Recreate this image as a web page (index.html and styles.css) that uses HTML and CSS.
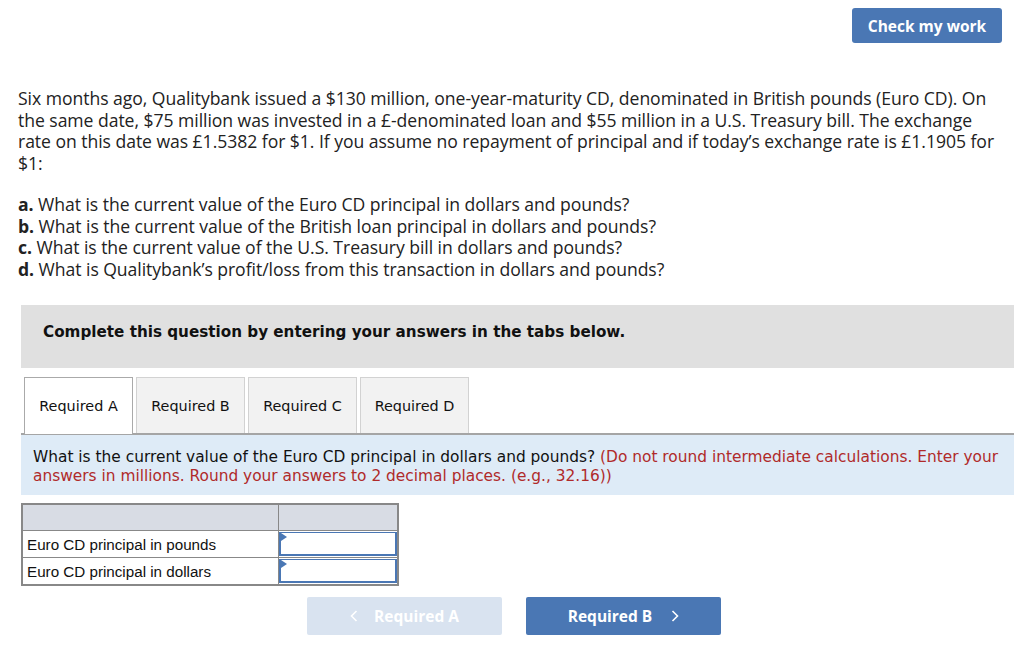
FILE: index.html
```html
<!DOCTYPE html>
<html>
<head>
<meta charset="utf-8">
<link rel="stylesheet" href="styles.css">
</head>
<body>
<div class="page">
  <div class="topbar">
    <button class="check">Check my work</button>
  </div>
  <div class="question">
    <p class="intro">Six months ago, Qualitybank issued a $130 million, one-year-maturity CD, denominated in British pounds (Euro CD). On the same date, $75 million was invested in a £-denominated loan and $55 million in a U.S. Treasury bill. The exchange rate on this date was £1.5382 for $1. If you assume no repayment of principal and if today’s exchange rate is £1.1905 for $1:</p>
    <ul class="parts">
      <li><b>a.</b> What is the current value of the Euro CD principal in dollars and pounds?</li>
      <li><b>b.</b> What is the current value of the British loan principal in dollars and pounds?</li>
      <li><b>c.</b> What is the current value of the U.S. Treasury bill in dollars and pounds?</li>
      <li><b>d.</b> What is Qualitybank’s profit/loss from this transaction in dollars and pounds?</li>
    </ul>
  </div>
  <div class="complete">Complete this question by entering your answers in the tabs below.</div>
  <div class="tabs">
    <div class="tab active">Required A</div>
    <div class="tab">Required B</div>
    <div class="tab">Required C</div>
    <div class="tab">Required D</div>
  </div>
  <div class="prompt">What is the current value of the Euro CD principal in dollars and pounds? <span class="hint">(Do not round intermediate calculations. Enter your answers in millions. Round your answers to 2 decimal places. (e.g., 32.16))</span></div>
  <table class="answers">
    <tr class="head"><td class="label"></td><td class="val"></td></tr>
    <tr><td class="label">Euro CD principal in pounds</td><td class="val"><div class="input"></div></td></tr>
    <tr><td class="label">Euro CD principal in dollars</td><td class="val"><div class="input"></div></td></tr>
  </table>
  <div class="nav">
    <button class="navbtn prev"><svg class="chev left" width="8" height="12" viewBox="0 0 8 12"><path d="M6.5 1 L1.5 6 L6.5 11" fill="none" stroke="#fff" stroke-width="1.6"/></svg>Required A</button>
    <button class="navbtn next">Required B<svg class="chev right" width="8" height="12" viewBox="0 0 8 12"><path d="M1.5 1 L6.5 6 L1.5 11" fill="none" stroke="#fff" stroke-width="1.6"/></svg></button>
  </div>
</div>
</body>
</html>
```

FILE: styles.css
```css
html, body { margin: 0; padding: 0; background: #fff; }
body { font-family: "Open Sans", "Liberation Sans", sans-serif; color: #222; }
.page { width: 1024px; }
.topbar { display: flex; justify-content: flex-end; padding: 8px 22px 0 0; }
.check {
  width: 150px; height: 35px; border: none; border-radius: 3px;
  background: #4a77b4; color: #fff; font-family: "Open Sans", sans-serif;
  font-weight: 700; font-size: 15.5px; cursor: pointer; padding: 0;
}
.question { padding: 45px 24px 0 18px; font-size: 17.6px; line-height: 21.5px; color: #222; letter-spacing: -0.05px; }
.intro { margin: 0; }
.parts { list-style: none; margin: 20px 0 0 0; padding: 0; }
.parts b { font-weight: 700; }
.complete {
  margin: 25px 10px 0 21px; height: 63px; box-sizing: border-box;
  background: #e0e0e0; padding: 0 22px 10px; display: flex; align-items: center;
  font-family: "DejaVu Sans", Verdana, sans-serif; font-weight: 700; font-size: 15.2px; color: #111;
}
.tabs { display: flex; gap: 3px; margin: 9px 0 0 24px; height: 56px; }
.tab {
  width: 109px; box-sizing: border-box; border: 1px solid #d2d2d2; border-bottom: none;
  background: #f2f2f2; display: flex; align-items: center; justify-content: center;
  font-family: "DejaVu Sans", Verdana, sans-serif; font-size: 14.4px; color: #111;
}
.tab.active { background: #fff; border-color: #aaa; position: relative; z-index: 1; height: 57px; }
.prompt {
  margin: 0 10px 0 21px; background: #deebf7; border-top: 2px solid #a5a5a5;
  padding: 13px 10px 9px 12px; min-height: 62px; box-sizing: border-box;
  font-family: "DejaVu Sans", Verdana, sans-serif; font-size: 15.4px; line-height: 19px; color: #111;
}
.hint { color: #b02a2a; }
.answers {
  margin: 8px 0 0 21px; border-collapse: collapse; border: 2px solid #888;
  font-family: "Liberation Sans", Arial, sans-serif; font-size: 15.2px; color: #111;
}
.answers td { border: 1px solid #888; height: 26px; padding: 0; }
.answers .head td { height: 25px; }
.answers .label { width: 256px; padding-left: 4px; box-sizing: border-box; }
.answers .val { width: 118px; }
.answers .head td { background: #d8dce4; }
.input {
  height: 24px; border: 2px solid #4a77b4; border-top-width: 1px; box-sizing: border-box; position: relative; background: #fff;
}
.input::before {
  content: ""; position: absolute; left: 0; top: 0;
  border-left: 6px solid #4a77b4; border-top: 4px solid transparent; border-bottom: 4px solid transparent;
}
.nav { display: flex; gap: 24px; margin: 11px 0 0 307px; }
.navbtn {
  width: 195px; height: 38px; border: none; border-radius: 2px; color: #fff;
  font-family: "Open Sans", sans-serif; font-weight: 700; font-size: 15.5px;
  display: flex; align-items: center; justify-content: center; padding: 0;
}
.prev { background: #d9e3f0; }
.next { background: #4a77b4; }
.chev.left { margin-right: 16px; }
.chev.right { margin-left: 19px; }
```
